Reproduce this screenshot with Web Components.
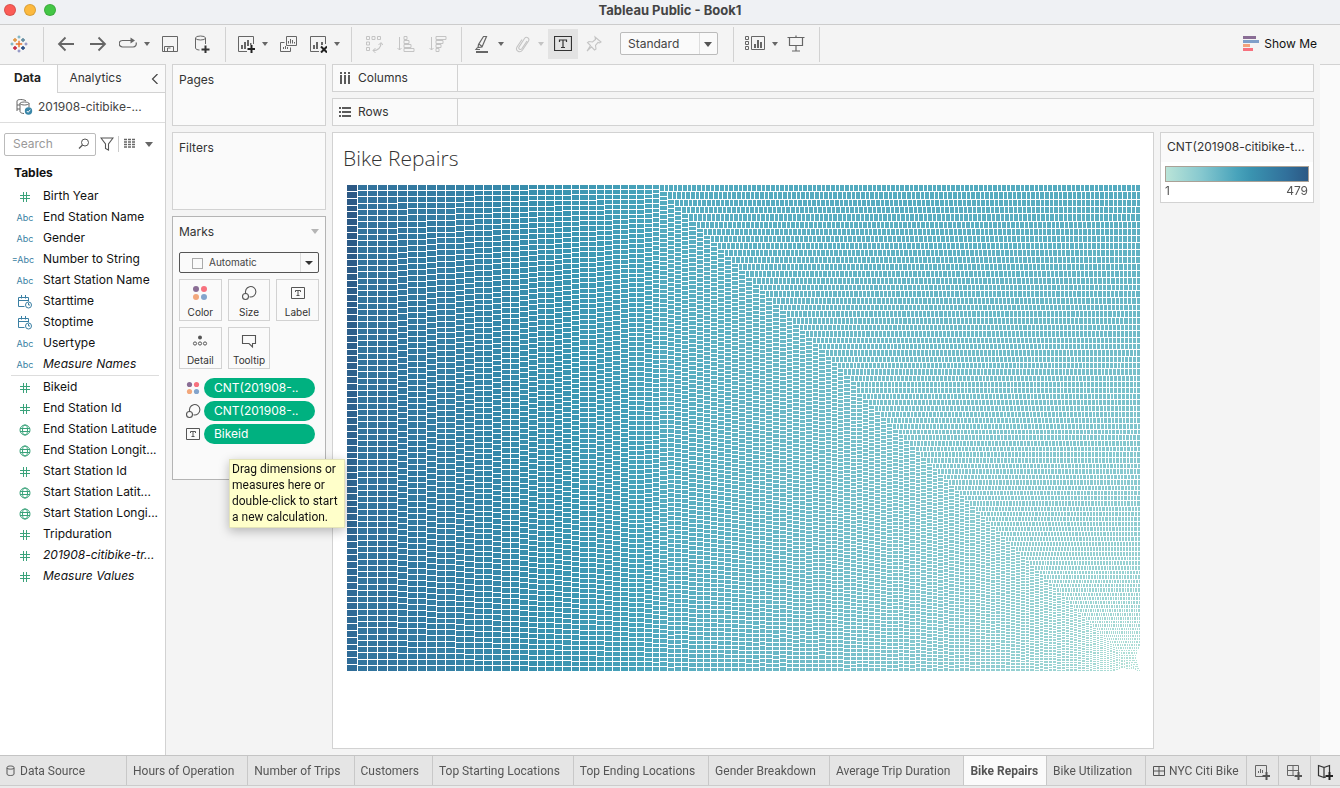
<!DOCTYPE html>
<html lang="en">
<head>
<meta charset="utf-8">
<title>Tableau Public - Book1</title>
<style>
  html, body { margin: 0; height: 100%; }
  body {
    font-family: Inter, Roboto, sans-serif;
    font-size: 12px; line-height: 16px; color: #333; background: #f4f4f4;
    overflow: hidden;
    --line: #d2d2d2; --soft: #fafafa; --ink: #5a5a5a; --green: #00b180;
  }
</style>
</head>
<body>
<tb-app></tb-app>
<script>
const ICONS = {
  logo: [18, `<g stroke-width="1.4" fill="none"><path stroke="#e8762c" stroke-width="1.4" d="M9 5.800v6.400M5.800 9h6.400"/><path stroke="#e0913a" d="M5 3v4M3 5h4"/><path stroke="#5b879b" d="M13 3v4M11 5h4"/><path stroke="#c4203b" d="M5 11v4M3 13h4"/><path stroke="#1f447e" d="M13 11v4M11 13h4"/><path stroke="#5fa3b5" stroke-width="1" d="M9 .5v3M7.500 2h3M2 7.500v3M.5 9h3"/><path stroke="#7b7fb8" stroke-width="1" d="M9 14.500v3M7.500 16h3M16 7.500v3M14.500 9h3"/></g>`],
  back: [18, `<path d="M17 9H2M8.500 2.500L2 9l6.500 6.500" fill="none" stroke="currentColor" stroke-width="1.800"/>`],
  forward: [18, `<path d="M1 9h15M9.500 2.500L16 9l-6.500 6.500" fill="none" stroke="currentColor" stroke-width="1.800"/>`],
  redo: [18, `<path d="M13 5.500H3.500a3.200 3.200 0 0 0 0 6.500h10.500a3.200 3.200 0 0 0 3-4.500" fill="none" stroke="currentColor" stroke-width="1.200"/><path d="M11.500 2.500l4.500 3-4.500 3z" fill="currentColor"/>`],
  save: [18, `<g fill="none" stroke="currentColor"><path d="M1.500 1.500h15v15h-15zM3.500 16.500v-5h9v5M6.500 16v-3h3"/></g>`],
  dbadd: [18, `<g fill="none" stroke="currentColor"><ellipse cx="7.500" cy="3" rx="5" ry="2"/><path d="M2.500 3v10c0 1.200 2 2 4 2M12.500 3v6"/></g><path d="M12.500 10.500v8M8.500 14.500h8" stroke="#333" stroke-width="2"/>`],
  chartadd: [18, `<g fill="none" stroke="currentColor"><path d="M10 16.500H1.500v-15h15V9"/></g><g fill="currentColor"><path d="M4 10h2v4H4zM7 7h2v7H7zM10 5h2v6h-2zM13 8h1.500v2H13z"/></g><path d="M14.500 10v8M10.500 14h8" stroke="#222" stroke-width="2"/>`],
  dup: [18, `<g fill="none" stroke="currentColor"><path d="M7.500 1.500h10v9h-10z"/><path d="M5.500 7.500h-4v9h10v-4M9.500 8.500V6M11.500 8.500V4M13.500 8.500V5M15.500 8.500V7M4.500 14v-2M6.500 14v-3M8.500 14v-2"/></g>`],
  clear: [18, `<g fill="none" stroke="currentColor"><path d="M10 16.500H1.500v-15h15V9"/></g><g fill="currentColor"><path d="M4 10h2v4H4zM7 7h2v7H7zM12 7h2v3h-2z"/></g><path d="M12 11.500l6 6M18 11.500l-6 6" stroke="#222" stroke-width="2"/>`],
  swap: [18, `<g fill="none" stroke="currentColor"><path d="M1.500 1.500h3v3h-3zM7 1.500h3v3H7zM12.500 1.500h3v3h-3zM1.500 7h3v3h-3zM1.500 12.500h3v3h-3z"/><path d="M8 15.500c5 0 8-3 8-7.500" stroke-width="1.300"/><path d="M13.500 10L16 7.500l2 2.500M10.500 13L8 15.500l2.500 2.500"/></g>`],
  asc: [18, `<g fill="none" stroke="currentColor"><path d="M2.500 2v13M.5 13l2 2 2-2M7 1.500h3v3H7zM7 5.500h5v3H7zM7 9.500h7v3H7zM7 13.500h10v3H7z"/></g>`],
  desc: [18, `<g fill="none" stroke="currentColor"><path d="M2.500 2v13M.5 13l2 2 2-2M7 1.500h10v3H7zM7 5.500h7v3H7zM7 9.500h5v3H7zM7 13.500h3v3H7z"/></g>`],
  pen: [18, `<g fill="none" stroke="currentColor" stroke-width="1.200"><path d="M10.500 1.500h3l-4.500 10.500-4 .5.500-3zM6 9l3.500 3M4.500 12.500L3 14.500h4"/></g><path d="M3 16h12v2H3z" fill="currentColor"/>`],
  clip: [18, `<path d="M14 6l-5 7.500c-1.500 2-4 .5-3-1.500l5.500-8.500c1.800-2.500 5.500-.5 4 2.500L9.500 15c-2.500 3.500-7.500 1-5.500-3l5-7.500" fill="none" stroke="currentColor" stroke-width="1.100"/>`],
  text: [18, `<path d="M.5 1.500h17v14H.5z" fill="none" stroke="#333" stroke-width="1.200"/><path d="M5.500 7V5h7v2M9 5v7.500M7 12.500h4" fill="none" stroke="#333" stroke-width="1.200"/>`],
  pin: [18, `<path d="M10 2l6 5-1.500 1-1.500-.5-2.500 3 .5 3.500-1.500 1-3-3.200L2 16l3.500-5.500L2.500 7.500 4 6.500l3.500.5L10.500 4.500z" fill="none" stroke="currentColor" stroke-width="1.100"/>`],
  cards: [20, `<g fill="none" stroke="currentColor"><path d="M.5 2.500h3v3h-3zM.5 7.500h3v3h-3zM.5 12.500h3v3h-3zM6.500 2.500h13v13h-13z"/></g><path d="M9 10h2v4H9zM12 6h2v8h-2zM15 8h2v6h-2z" fill="currentColor"/>`],
  present: [18, `<g fill="none" stroke="currentColor" stroke-width="1.200"><path d="M.5 2.500h17M2.500 2.500v8h13v-8M9 .5v2M9 10.500v5M5 16h8"/></g>`],
  showme: [16, `<path fill="#8a6d95" d="M0 0h13v3H0z"/><path fill="#7f9fc9" d="M0 4h16v3H0z"/><path fill="#f2a27b" d="M0 8h7v3H0z"/><path fill="#f7717e" d="M0 12h10v3H0z"/>`],
  hash: [10, `<path d="M3.500 0v10M6.500 0v10M0 3.500h10M0 6.500h10" stroke="#3aa37b" fill="none"/>`],
  globe: [12, `<g fill="none" stroke="#3aa37b"><circle cx="6" cy="6" r="5"/><ellipse cx="6" cy="6" rx="2.500" ry="5"/><path d="M1 4.500h10M1 7.500h10"/></g>`],
  date: [14, `<g fill="none" stroke="#3a7fa3"><path d="M6.500 11.500h-6v-9h10v4M.5 5.500h10M3.500 0v3.500M7.500 0v3.500"/><circle cx="10.500" cy="10" r="3"/><path d="M10.500 8v2H12"/></g>`],
  source: [18, `<g fill="none" stroke="#666"><path d="M2 13V3c0-2 7-2 9 0M5 5.500c0-2 9-2 9 0v4M5 5.500v8c0 1 2 2 4 2M5 5.500c1 2 8 2 9 0M2 7h3M2 11h3"/></g><circle cx="13.500" cy="13" r="3.700" fill="#3a86a8"/><path d="M11.800 13l1.300 1.300 2.300-2.600" fill="none" stroke="#fff"/>`],
  funnel: [14, `<path d="M1 1h12L8.500 7v6l-3-1.500V7z" fill="none" stroke="#555" stroke-width="1.100"/>`],
  list: [14, `<path d="M1 2.500h12M1 5h12M1 7.500h12M1 10h12" stroke="#666" stroke-width="1.300" stroke-dasharray="3 1"/>`],
  lens: [12, `<circle cx="7" cy="4.500" r="3.500" fill="none" stroke="#555"/><path d="M4.500 7L1 10.500" stroke="#555" stroke-width="1.300"/>`],
  chevron: [10, `<path d="M7.500 0L2.500 5l5 5" fill="none" stroke="#444" stroke-width="1.200"/>`],
  columns: [12, `<path d="M1 0h2v2H1zM5 0h2v2H5zM9 0h2v2H9zM1 3h2v9H1zM5 3h2v9H5zM9 3h2v9H9z" fill="#5a5a5a"/>`],
  rows: [12, `<path d="M0 1h2v2H0zM0 5h2v2H0zM0 9h2v2H0zM3 1h9v2H3zM3 5h9v2H3zM3 9h9v2H3z" fill="#5a5a5a"/>`],
  color: [16, `<circle cx="4" cy="4" r="3" fill="#8a6d95"/><circle cx="12" cy="4" r="3" fill="#f7717e"/><circle cx="4" cy="12" r="3" fill="#f2a77b"/><circle cx="12" cy="12" r="3" fill="#83a4cc"/>`],
  dots: [14, `<circle cx="3.500" cy="3.500" r="2.600" fill="#8a6d95"/><circle cx="10.500" cy="3.500" r="2.600" fill="#f7717e"/><circle cx="3.500" cy="10.500" r="2.600" fill="#f2a77b"/><circle cx="10.500" cy="10.500" r="2.600" fill="#83a4cc"/>`],
  size: [16, `<path d="M5 9A5.200 5.200 0 1 1 8.500 11.800" fill="none" stroke="#555" stroke-width="1.100"/><circle cx="4.500" cy="11.500" r="3" fill="none" stroke="#555" stroke-width="1.100"/>`],
  label: [14, `<path d="M.5 1.500h13v11H.5zM4.500 6V4.500h5V6M7 4.500v5M5.500 9.500h3" fill="none" stroke="#555"/>`],
  detail: [16, `<circle cx="8" cy="4.500" r="2" fill="#555"/><g fill="none" stroke="#555"><circle cx="3" cy="10.500" r="1.600"/><circle cx="8" cy="10.500" r="1.600"/><circle cx="13" cy="10.500" r="1.600"/></g>`],
  tip: [16, `<path d="M1.500 2.500h13v8h-3v3.500l-3.500-3.500H1.500z" fill="none" stroke="#555" stroke-width="1.100"/>`],
  db: [11, `<path d="M2 2.500c0-2 7-2 7 0v6.500c0 2-7 2-7 0zM2 3c0 1.500 7 1.500 7 0" fill="none" stroke="#555"/>`],
  dash: [12, `<path d="M.5 1.500h11v9H.5zM6 1.500v9M.5 6h11" fill="none" stroke="#555"/>`],
  addsheet: [16, `<path d="M9 12.500H1.500v-11h11V8M4.500 9V7M6.500 9V5M8.500 9V6" fill="none" stroke="#666"/><path d="M12.500 8v8M8.500 12h8" stroke="#555" stroke-width="2"/>`],
  adddash: [16, `<path d="M8 11.500H1.500v-10h11V8M7 1.500v10M1.500 6.500h11" fill="none" stroke="#666"/><path d="M12.500 8v8M8.500 12h8" stroke="#555" stroke-width="2"/>`],
  addstory: [16, `<path d="M7 13.500l-5.500-2v-10L7 3.500v10l2-.5M7 3.500l5.500-2V8" fill="none" stroke="#333" stroke-width="1.200"/><path d="M12.500 8v8M8.500 12h8" stroke="#222" stroke-width="2"/>`]
};

const FIELDS = [
  ['hash', 'Birth Year'], ['abc', 'End Station Name'], ['abc', 'Gender'], ['calc', 'Number to String'],
  ['abc', 'Start Station Name'], ['date', 'Starttime'], ['date', 'Stoptime'], ['abc', 'Usertype'],
  ['abc', 'Measure Names', 1], null,
  ['hash', 'Bikeid'], ['hash', 'End Station Id'], ['globe', 'End Station Latitude'], ['globe', 'End Station Longit...'],
  ['hash', 'Start Station Id'], ['globe', 'Start Station Latit...'], ['globe', 'Start Station Longi...'],
  ['hash', 'Tripduration'], ['hash', '201908-citibike-tr...', 1], ['hash', 'Measure Values', 1]
];
const SHEETS = ['Hours of Operation', 'Number of Trips', 'Customers', 'Top Starting Locations',
  'Top Ending Locations', 'Gender Breakdown', 'Average Trip Duration', 'Bike Repairs', 'Bike Utilization'];

const BASE = `*{box-sizing:border-box} button,input,select{font:inherit;color:inherit;margin:0;border-radius:0}
button{background:none;border:0;padding:0}`;
function define(name, css, html, after) {
  const t = document.createElement('template');
  t.innerHTML = `<style>:host{box-sizing:border-box}${BASE}${css}</style>${html}`;
  customElements.define(name, class extends HTMLElement {
    connectedCallback() {
      if (this.shadowRoot) return;
      this.attachShadow({ mode: 'open' }).append(t.content.cloneNode(true));
      if (after) after.call(this, this.shadowRoot);
    }
  });
}
function icon(name) {
  const el = document.createElement('tb-icon');
  el.setAttribute('name', name);
  return el;
}

define('tb-icon', `:host{display:inline-flex;flex:none}svg{display:block}`, ``, function (root) {
  const [size, art] = ICONS[this.getAttribute('name')];
  root.innerHTML += `<svg width="${size}" height="${size}" viewBox="0 0 ${size} ${size}" aria-hidden="true">${art}</svg>`;
});

define('tb-titlebar', `
  :host{display:grid;grid-template-columns:1fr auto 1fr;align-items:center;height:24px;flex:none;padding:0 4px 4px;background:#eff1f4}
  .lights{display:flex;gap:8px} i{width:12px;height:12px;border-radius:50%;border:1px solid #0002}
  h1{margin:0;font-size:13px;font-weight:700;color:#444}`,
  `<div class="lights"><i style="background:#fb5c57"></i><i style="background:#fcb93e"></i><i style="background:#43c645"></i></div><h1><slot></slot></h1>`);

define('tb-tool', `
  :host{display:flex;color:#666} :host([off]){color:#c4c4c4}
  button{width:32px;height:30px;display:flex;align-items:center;justify-content:center}
  :host([menu]) button{width:40px;justify-content:flex-start;padding-left:5px;gap:9px}
  :host([on]) button{width:30px;background:#e3e3e3}
  b{display:none;border:3px solid transparent;border-top:4px solid;border-bottom:0;margin-left:-2px}
  :host([menu]) b{display:block;border-left-color:transparent;border-right-color:transparent}`,
  `<button type="button"><b></b></button>`, function (root) {
    const button = root.querySelector('button');
    button.setAttribute('aria-label', this.getAttribute('label'));
    button.prepend(icon(this.getAttribute('icon')));
  });

define('tb-toolbar', `
  :host{display:flex;height:40px;flex:none;border-top:1px solid #ccc;background:#f4f4f4}
  .g{display:flex;align-items:center;padding:0 7px 2px 6px;border-right:1px solid var(--line);height:35px;margin-top:2px}
  .home{padding:0 8px 2px 3px}
  .show{margin-left:auto;padding:0 23px 2px 0;display:flex;align-items:center;gap:5px;color:#111}
  .sel{position:relative;margin:0 8px 0 10px}
  select{appearance:none;width:98px;height:23px;border:1px solid #bbb;border-radius:2px;background:#fafafa;padding:0 24px 0 7px;color:#444}
  .sel::before{content:"";position:absolute;right:18px;top:1px;bottom:1px;border-left:1px solid #ddd}
  .sel::after{content:"";position:absolute;right:6px;top:10px;border:4px solid transparent;border-top:5px solid #555;border-bottom:0}`,
  `<div class="g home"><tb-tool icon="logo" label="Start page"></tb-tool></div>
   <div class="g"><tb-tool icon="back" label="Undo"></tb-tool><tb-tool icon="forward" label="Redo"></tb-tool><tb-tool menu icon="redo" label="Replay"></tb-tool><tb-tool icon="save" label="Save"></tb-tool><tb-tool icon="dbadd" label="New data source"></tb-tool></div>
   <div class="g"><tb-tool menu icon="chartadd" label="New worksheet"></tb-tool><tb-tool icon="dup" label="Duplicate"></tb-tool><tb-tool menu icon="clear" label="Clear sheet"></tb-tool></div>
   <div class="g"><tb-tool off icon="swap" label="Swap"></tb-tool><tb-tool off icon="asc" label="Sort ascending"></tb-tool><tb-tool off icon="desc" label="Sort descending"></tb-tool></div>
   <div class="g"><tb-tool menu icon="pen" label="Highlight"></tb-tool><tb-tool off menu icon="clip" label="Group members"></tb-tool><tb-tool on icon="text" label="Show mark labels"></tb-tool><tb-tool off icon="pin" label="Fix axes"></tb-tool>
     <div class="sel"><select aria-label="Fit"><option>Standard</option></select></div></div>
   <div class="g"><tb-tool menu icon="cards" label="Show or hide cards"></tb-tool><tb-tool icon="present" label="Presentation mode"></tb-tool></div>
   <button class="show" type="button"><tb-icon name="showme"></tb-icon>Show Me</button>`);

define('tb-field', `
  :host{display:flex;align-items:center;height:21px;padding-left:11px;color:#111}
  .k{width:28px;display:flex;justify-content:center;flex:none;margin-right:4px;padding-top:2px;font-size:9px;color:#3a7fa3;white-space:pre}
  :host([i]) span{font-style:italic} .k.calc{margin-left:-2px;margin-right:6px} span{white-space:nowrap}`,
  `<div class="k"></div><span><slot></slot></span>`, function (root) {
    const kind = this.getAttribute('kind'), k = root.querySelector('.k');
    k.classList.add(kind);
    k.innerHTML = kind === 'abc' ? 'Abc' : kind === 'calc' ? '=Abc' : `<tb-icon name="${kind}"></tb-icon>`;
  });

define('tb-datapane', `
  :host{display:flex;flex-direction:column;width:166px;flex:none;background:#fff;border:1px solid var(--line);border-width:1px 1px 0 0}
  .tabs{display:flex;height:28px}
  .tabs button{padding:0 0 2px;width:57px} .tabs .on{font-weight:700;color:#222;padding-right:2px}
  .an{flex:1;display:flex;align-items:center;justify-content:space-between;background:var(--soft);border:1px solid var(--line);border-width:0 0 1px 1px;padding:0 5px 0 9px}
  .src{height:30px;display:flex;align-items:center;gap:5px;padding:0 15px 2px;border-bottom:1px solid #ddd;color:#444}
  .find{display:flex;align-items:center;margin:9px 0 0 4px;height:24px}
  label{display:flex;align-items:center;width:92px;height:23px;border:1px solid #bbb;border-radius:2px;padding:0 5px 0 8px;background:#fff}
  input{border:0;outline:0;padding:0;width:65px;background:none} input::placeholder{color:#999}
  .f{margin:0 4px 0 4px}.l{border-left:1px solid #ccc;padding:1px 0 1px 4px;display:flex}
  .c{border:4px solid transparent;border-top:5px solid #666;border-bottom:0;margin-left:8px}
  h2{font-size:12px;line-height:16px;margin:9px 0 4px 14px;color:#111;font-weight:700}
  hr{margin:1px 6px 0 11px;border:0;border-top:1px solid #ddd}`,
  `<div class="tabs"><button type="button" class="on">Data</button><div class="an"><button type="button">Analytics</button><tb-icon name="chevron"></tb-icon></div></div>
   <div class="src"><tb-icon name="source"></tb-icon>201908-citibike-...</div>
   <div class="find"><label><input placeholder="Search" aria-label="Search"><tb-icon name="lens"></tb-icon></label><tb-icon class="f" name="funnel"></tb-icon><span class="l"><tb-icon name="list"></tb-icon></span><i class="c"></i></div>
   <h2>Tables</h2><div class="fields"></div>`, function (root) {
    root.querySelector('.fields').innerHTML = FIELDS.map(f => f
      ? `<tb-field kind="${f[0]}"${f[2] ? ' i' : ''}>${f[1]}</tb-field>` : '<hr>').join('');
  });

define('tb-card', `:host{display:block;border:1px solid var(--line);background:var(--soft);padding:7px 6px}`, `<slot></slot>`);

define('tb-pill', `
  :host{display:flex;align-items:center;height:20px;margin:0 3px 3px 6px;gap:3px}
  .k{width:16px;display:flex;justify-content:center} button{width:111px;height:20px;border-radius:10px;background:var(--green);color:#fff;text-align:left;padding-left:10px}`,
  `<div class="k"><slot name="icon"></slot></div><button type="button"><slot></slot></button>`);

define('tb-marks', `
  :host{display:block;border:1px solid #b4b4b4;background:var(--soft);height:264px;padding:6px;position:relative}
  header{display:flex;align-items:center;justify-content:space-between;height:17px}
  header i{border:4px solid transparent;border-top:5px solid #b5b5b5;border-bottom:0}
  .sel{position:relative;margin:12px 0 6px;height:21px;font-size:10px}
  select{appearance:none;width:100%;height:21px;border:1px solid #555;border-radius:2px;background:#fff0;padding:0 20px 1px 29px;color:#444;position:relative}
  .sel::before{content:"";position:absolute;left:13px;top:6px;width:9px;height:9px;border:1px solid #aaa}
  .sel::after{content:"";position:absolute;right:6px;top:9px;border:4px solid transparent;border-top:4px solid #333;border-bottom:0}
  .sel u{position:absolute;right:18px;top:1px;bottom:1px;border-left:1px solid #ddd}
  .b{display:grid;grid-template-columns:repeat(3,1fr);gap:6px;margin-bottom:9px}
  .b button{height:42px;border:1px solid var(--line);font-size:10px;line-height:14px;display:flex;flex-direction:column;align-items:center;justify-content:space-between;padding:5px 0 1px}
  .b tb-icon{height:16px;align-items:center}
  .tip{position:absolute;left:56px;top:242px;width:116px;height:69px;background:#ffffca;border:1px solid #e4e4b8;box-shadow:0 3px 10px #0004;padding:1px 0 0 2px;color:#111;font-family:Roboto,sans-serif;white-space:nowrap;z-index:2}`,
  `<header>Marks<i></i></header>
   <div class="sel"><select aria-label="Mark type"><option>Automatic</option></select><u></u></div>
   <div class="b"><button type="button"><tb-icon name="color"></tb-icon>Color</button><button type="button"><tb-icon name="size"></tb-icon>Size</button><button type="button"><tb-icon name="label"></tb-icon>Label</button><button type="button"><tb-icon name="detail"></tb-icon>Detail</button><button type="button"><tb-icon name="tip"></tb-icon>Tooltip</button></div>
   <tb-pill><tb-icon slot="icon" name="dots"></tb-icon>CNT(201908-..</tb-pill>
   <tb-pill><tb-icon slot="icon" name="size"></tb-icon>CNT(201908-..</tb-pill>
   <tb-pill><tb-icon slot="icon" name="label"></tb-icon>Bikeid</tb-pill>
   <div class="tip" role="tooltip">Drag dimensions or<br>measures here or<br>double-click to start<br>a new calculation.</div>`);

define('tb-shelf', `
  :host{display:flex;height:28px;flex:none;border:1px solid var(--line);background:var(--soft)}
  div{width:125px;border-right:1px solid var(--line);display:flex;align-items:center;gap:7px;padding-left:6px}`,
  `<div><slot></slot></div>`, function (root) {
    root.querySelector('div').prepend(icon(this.getAttribute('icon')));
  });

// Palette stops of the sequential scale, from few trips to many.
const STOPS = [[0, 186, 228, 216], [.25, 134, 200, 207], [.5, 72, 163, 187], [.6, 58, 147, 176], [.85, 49, 112, 155], [1, 44, 89, 133]];
function shade(p) {
  p = Math.min(1, Math.max(0, p));
  let i = 1; while (STOPS[i][0] < p) i++;
  const a = STOPS[i - 1], b = STOPS[i], f = (p - a[0]) / (b[0] - a[0]);
  return `rgb(${[1, 2, 3].map(k => Math.round(a[k] + (b[k] - a[k]) * f)).join()})`;
}
// Strip thickness for the shorter distance that is still to be filled.
const THICK = [[0, 1.5], [8, 2], [20, 2.6], [45, 3.5], [70, 4.1], [140, 5], [323, 6.4], [480, 7.4], [500, 7.8], [700, 9.5], [760, 10], [785, 10], [793, 11]];
function thickness(s) {
  let i = 1; while (i < THICK.length - 1 && THICK[i][0] < s) i++;
  const a = THICK[i - 1], b = THICK[i];
  return a[1] + (b[1] - a[1]) * (s - a[0]) / (b[0] - a[0]);
}
define('tb-treemap', `:host{display:block;aspect-ratio:793/486;overflow:hidden}canvas{display:block;width:100%;height:100%}`, `<canvas role="img" aria-label="Treemap of trips per bike"></canvas>`, function (root) {
  const canvas = root.querySelector('canvas');
  const draw = () => {
    const W = this.clientWidth, H = this.clientHeight, u = 793 / (W || 793);
    if (!W) return;
    canvas.width = W; canvas.height = H;
    const g = canvas.getContext('2d');
    let x = 0, y = 0;
    while (W - x > 2 && H - y > 2) {
      const w = W - x, h = H - y, column = w > h, t = thickness(w * u) / u;
      const along = column ? h : w;
      const n = Math.max(2, Math.round(along * 1.6 / t)), step = along / n;
      const share = t * t * u * u / 1.6 / .158 / 479;
      for (let i = 0; i < n; i++) {
        g.fillStyle = shade(x === 0 ? 1 - .13 * i / n : share - .01 * i / n);
        const a = Math.round(i * step), b = Math.round((i + 1) * step);
        const c0 = Math.round(column ? x : y), c1 = Math.round((column ? x : y) + t);
        if (w < 30 && i / n > .35 + w / 46) continue;
        const len = Math.max(1, b - a - 1), th = Math.max(1, c1 - c0 - 1);
        if (column) g.fillRect(c0, Math.round(y) + a, th, len);
        else g.fillRect(Math.round(x) + a, c0, len, th);
      }
      if (column) x += t; else y += t;
    }
  };
  draw();
  new ResizeObserver(draw).observe(this);
});

define('tb-view', `
  :host{display:block;background:#fff;border:1px solid var(--line);padding:13px 12px 0 14px}
  h2{margin:0 0 14px -4px;font:300 21px/25px "Open Sans",sans-serif;color:#333}`,
  `<h2>Bike Repairs</h2><tb-treemap></tb-treemap>`);

define('tb-legend', `
  :host{display:block;width:154px;height:71px;border:1px solid var(--line);background:#fff;flex:none}
  div{background:var(--soft);height:29px;padding:6px 0 0 6px;white-space:nowrap;overflow:hidden}
  p{margin:4px 4px 1px;height:16px;border:1px solid #aaa196;background:linear-gradient(90deg,#bae4d8,#86c8cf 25%,#48a3bb 50%,#3a93b0 60%,#31709b 85%,#2c5985)}
  footer{display:flex;justify-content:space-between;padding:0 5px 0 4px;color:#555}`,
  `<div>CNT(201908-citibike-t...</div><p></p><footer><span>1</span><span>479</span></footer>`);

define('tb-sheets', `
  :host{display:block;flex:none;border-top:1px solid #c4c4c4;background:#ebebeb;color:#555;font-family:Roboto,sans-serif}
  nav{display:flex;height:30px;background:#e5e5e5;border-bottom:1px solid #ccc;overflow:hidden}
  button{border-right:1px solid #c8c8c8;padding:0 13px 0 6px;display:flex;align-items:center;gap:4px;white-space:nowrap;flex:none}
  .ds{width:127px;padding-left:5px}.on{background:var(--soft);font-weight:700;padding-right:8px}
  .n{width:32px;padding:2px 0 0;justify-content:center}.n:last-child{width:auto;flex:1;border:0}.d{padding:0 7px}
  .end{height:2px}`,
  `<nav></nav><div class="end"></div>`, function (root) {
    root.querySelector('nav').innerHTML =
      `<button class="ds" type="button"><tb-icon name="db"></tb-icon>Data Source</button>` +
      SHEETS.map(s => `<button type="button"${s === 'Bike Repairs' ? ' class="on"' : ''}>${s}</button>`).join('') +
      `<button class="d" type="button"><tb-icon name="dash"></tb-icon>NYC Citi Bike</button>
       <button class="n" type="button" aria-label="New worksheet"><tb-icon name="addsheet"></tb-icon></button>
       <button class="n" type="button" aria-label="New dashboard"><tb-icon name="adddash"></tb-icon></button>
       <button class="n" type="button" aria-label="New story"><tb-icon name="addstory"></tb-icon></button>`;
  });

define('tb-app', `
  :host{display:flex;flex-direction:column;height:100vh}
  main{flex:1;display:flex;min-height:0}
  .cards{width:154px;margin:0 6px;display:flex;flex-direction:column;gap:6px;flex:none}
  .pages{height:62px}.filters{height:78px}
  .work{flex:1;min-width:0;display:flex;flex-direction:column;gap:6px;padding-bottom:6px}
  .view{flex:1;min-height:0;display:flex;gap:6px;align-items:flex-start}
  tb-view{flex:1;min-width:0;align-self:stretch}
  aside{width:20px;flex:none;margin-left:6px;background:var(--soft);border-top:1px solid var(--line)}`,
  `<tb-titlebar>Tableau Public - Book1</tb-titlebar><tb-toolbar></tb-toolbar>
   <main><tb-datapane></tb-datapane>
     <div class="cards"><tb-card class="pages">Pages</tb-card><tb-card class="filters">Filters</tb-card><tb-marks></tb-marks></div>
     <div class="work"><tb-shelf icon="columns">Columns</tb-shelf><tb-shelf icon="rows">Rows</tb-shelf>
       <div class="view"><tb-view></tb-view><tb-legend></tb-legend></div></div>
     <aside></aside></main>
   <tb-sheets></tb-sheets>`);
</script>
</body>
</html>
